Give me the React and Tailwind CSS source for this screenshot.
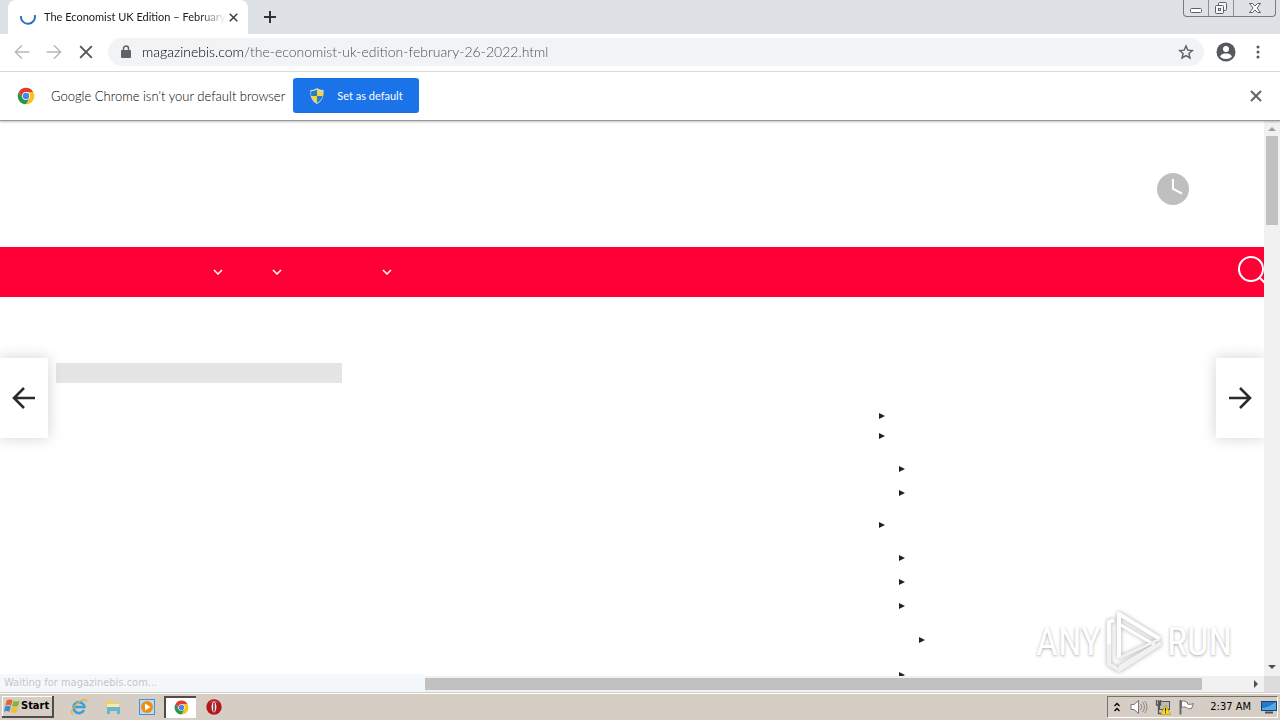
import React from "react";

const uiFont = "font-['Lato','Open_Sans',sans-serif]";
const winFont = "font-['DejaVu_Sans_Condensed','DejaVu_Sans',sans-serif]";

function ChromeLogo({ className }) {
  return (
    <svg viewBox="0 0 48 48" className={className} aria-hidden="true">
      <path d="M24 2A22 22 0 0 0 4.9 13L14.5 29.5 24 24 24 13H43.1A22 22 0 0 0 24 2Z" fill="#e33b2e" />
      <path d="M43.1 13H24L33.5 29.5 24 46A22 22 0 0 0 43.1 13Z" fill="#fbc116" />
      <path d="M4.9 13A22 22 0 0 0 24 46L33.5 29.5 24 24 14.5 29.5Z" fill="#279847" />
      <circle cx="24" cy="24" r="10.5" fill="#fff" />
      <circle cx="24" cy="24" r="8.5" fill="#4285f4" />
    </svg>
  );
}

function Cross({ className, width = 2 }) {
  return (
    <svg viewBox="0 0 12 12" className={className} fill="none" stroke="currentColor" strokeWidth={width} aria-hidden="true">
      <path d="M1 1 11 11M11 1 1 11" />
    </svg>
  );
}

function Arrow({ className, width = 2 }) {
  return (
    <svg viewBox="0 0 24 24" className={className} fill="none" stroke="currentColor" strokeWidth={width} aria-hidden="true">
      <path d="M23 12H3M12 2 2 12l10 10" />
    </svg>
  );
}

function TabStrip() {
  return (
    <header className="flex h-[34px] shrink-0 items-start justify-between bg-[#dee1e6] pl-2">
      <div className="flex h-full items-center">
        <div className="flex h-full w-60 items-center rounded-t-lg bg-white pl-3 pr-2">
          <svg viewBox="0 0 16 16" className="mr-2 size-4 shrink-0" fill="none" stroke="#2f6fc4" strokeWidth="2" aria-hidden="true">
            <path d="M14.7 6A7 7 0 1 1 1 7" />
          </svg>
          <span className="whitespace-nowrap text-[11px] leading-4 text-[#202124] [mask-image:linear-gradient(to_right,#000_85%,transparent)]">
            The Economist UK Edition – February
          </span>
          <button aria-label="Close tab" className="ml-auto grid w-4 shrink-0 place-items-center text-[#3c4043]">
            <Cross className="size-[9px]" />
          </button>
        </div>
        <button aria-label="New tab" className="ml-3.5 grid size-4 place-items-center text-[#303236]">
          <svg viewBox="0 0 12 12" className="size-3" stroke="currentColor" strokeWidth="2" aria-hidden="true">
            <path d="M6 0V12M0 6H12" />
          </svg>
        </button>
      </div>
      <div className="mr-1 flex h-[17px] rounded-b-[4px] border border-t-0 border-[#777b84] text-[#5c6069]">
        <button aria-label="Minimize" className="grid w-[25px] place-items-center border-r border-[#8b8f98]">
          <svg viewBox="0 0 14 12" className="h-3 w-3.5" aria-hidden="true">
            <rect x="1.5" y="6.5" width="11" height="4" rx="1" fill="#fff" stroke="currentColor" />
          </svg>
        </button>
        <button aria-label="Restore" className="grid w-[25px] place-items-center border-r border-[#8b8f98]">
          <svg viewBox="0 0 14 14" className="size-3.5" fill="#f4f5f7" stroke="currentColor" aria-hidden="true">
            <rect x="4.5" y="1.5" width="8" height="8" rx="1" />
            <rect x="1.5" y="4.5" width="8" height="8" rx="1" />
            <rect x="4.5" y="7.5" width="2" height="2" />
          </svg>
        </button>
        <button aria-label="Close window" className="grid w-[41px] place-items-center">
          <svg viewBox="0 0 14 12" className="h-3 w-3.5" fill="#fff" stroke="currentColor" aria-hidden="true">
            <path d="M1.5 1.5H4.5L7 4 9.5 1.5H12.5L9 6 12.5 10.5H9.5L7 8 4.5 10.5H1.5L5 6Z" />
          </svg>
        </button>
      </div>
    </header>
  );
}

function Toolbar() {
  return (
    <div className="flex h-[38px] shrink-0 items-center border-b border-[#dadce0] bg-white px-3.5 pb-0.5">
      <button aria-label="Back" className="mr-4 text-[#b4b6b9]">
        <Arrow className="size-4" />
      </button>
      <button aria-label="Forward" className="mr-4 text-[#b4b6b9]">
        <Arrow className="size-4 rotate-180" />
      </button>
      <button aria-label="Stop loading" className="mr-3.5 grid size-4 place-items-center text-[#55585c]">
        <Cross className="size-3.5" width={1.7} />
      </button>
      <div className="flex h-7 flex-1 items-center rounded-full bg-[#f1f3f4] pl-[13px] pr-2.5">
        <svg viewBox="0 0 10 14" className="mr-[11px] h-3.5 w-2.5 shrink-0" aria-hidden="true">
          <rect x="0" y="5" width="10" height="8" rx="1" fill="#5f6368" />
          <path d="M2.5 5.5V3.5a2.5 2.5 0 0 1 5 0V5.5" fill="none" stroke="#5f6368" strokeWidth="1.5" />
        </svg>
        <input
          aria-label="Address"
          defaultValue="magazinebis.com/the-economist-uk-edition-february-26-2022.html"
          className="min-w-0 flex-1 bg-[linear-gradient(to_right,#000_102px,#45494e_102px)] bg-clip-text text-sm font-light leading-5 text-transparent outline-none"
        />
        <button aria-label="Bookmark this page" className="text-[#5f6368]">
          <svg viewBox="0 0 24 24" className="size-4" fill="none" stroke="currentColor" strokeWidth="2.2" aria-hidden="true">
            <path d="M12 3l2.7 6.200 6.800.6-5.100 4.500 1.500 6.600L12 17.400l-5.900 3.500 1.500-6.600L2.500 9.800l6.800-.6z" />
          </svg>
        </button>
      </div>
      <button aria-label="Profile" className="ml-3">
        <svg viewBox="0 0 20 20" className="size-5" aria-hidden="true">
          <circle cx="10" cy="10" r="9.5" fill="#55585c" />
          <circle cx="10" cy="7" r="3" fill="#fff" />
          <path d="M4 14.5c1-2.500 4-3 6-3s5 .5 6 3c-1.500 1.700-3.500 2.500-6 2.500s-4.500-.8-6-2.500z" fill="#fff" />
        </svg>
      </button>
      <button aria-label="Browser menu" className="ml-3.5">
        <svg viewBox="0 0 16 16" className="size-4" fill="#55585c" aria-hidden="true">
          <circle cx="8" cy="3" r="1.5" />
          <circle cx="8" cy="8" r="1.5" />
          <circle cx="8" cy="13" r="1.5" />
        </svg>
      </button>
    </div>
  );
}

function InfoBar() {
  return (
    <div className="z-10 flex h-[49px] shrink-0 items-center border-b border-[#97999c] bg-white pb-px pl-[17px] pr-[18px] shadow-[0_1px_2px_rgba(0,0,0,0.25)]">
      <ChromeLogo className="mr-4 size-[18px]" />
      <p className="text-[13px] font-light leading-5 text-black">Google Chrome isn't your default browser</p>
      <button className="ml-2 flex h-[35px] items-center rounded-[3px] bg-[#1a73e8] px-4 text-[11px] leading-4 text-white">
        <svg viewBox="0 0 16 16" className="mr-3 size-4" aria-hidden="true">
          <path d="M8 0C6 1.500 4 2 1.500 2 1 8 2.500 13 8 16 13.500 13 15 8 14.500 2 12 2 10 1.500 8 0Z" fill="#d6dde0" />
          <path d="M8 1.500V8H2.300C2 6.300 2 4.500 2.200 3.200 4.500 3.100 6.300 2.600 8 1.500Z" fill="#267fc0" />
          <path d="M8 1.500V8h5.700c.3-1.700.3-3.500.1-4.800C11.500 3.100 9.700 2.600 8 1.500Z" fill="#f6d33c" />
          <path d="M8 8H2.300C3 11 5 13.300 8 14.900Z" fill="#f6d33c" />
          <path d="M8 8h5.700C13 11 11 13.300 8 14.900Z" fill="#267fc0" />
        </svg>
        Set as default
      </button>
      <button aria-label="Dismiss" className="ml-auto text-[#5f6368]">
        <Cross className="size-3" width={2} />
      </button>
    </div>
  );
}

function Chevron({ className }) {
  return (
    <button aria-label="Open submenu" className={className}>
      <svg viewBox="0 0 10 6" className="h-1.5 w-2.5" fill="none" stroke="#fff" strokeWidth="1.5" aria-hidden="true">
        <path d="M1 1 5 5 9 1" />
      </svg>
    </button>
  );
}

function Item({ children }) {
  return (
    <li>
      <div className="flex h-5 items-center">
        <svg viewBox="0 0 6 6" className="size-1.5" fill="#222" aria-hidden="true">
          <path d="M0 0 6 3 0 6Z" />
        </svg>
      </div>
      {children}
    </li>
  );
}

function Contents() {
  return (
    <ul className="w-[385px] pt-[109px]">
      <Item />
      <Item>
        <ul className="mb-3 mt-[13px] flex flex-col gap-1 pl-5">
          <Item />
          <Item />
        </ul>
      </Item>
      <Item>
        <ul className="mt-[13px] flex flex-col gap-1 pl-5">
          <Item />
          <Item />
          <Item>
            <ul className="mb-[11px] mt-3.5 pl-5">
              <Item />
            </ul>
          </Item>
          <Item />
        </ul>
      </Item>
    </ul>
  );
}

function Watermark() {
  const text =
    "font-['Roboto_Condensed','Liberation_Sans_Narrow','Open_Sans_Condensed','Noto_Sans',sans-serif] text-[38px] font-normal leading-[48px] text-white [text-shadow:0_1px_3px_#aaa]";
  return (
    <div className="absolute bottom-0.5 right-8 flex items-center" aria-label="ANY RUN">
      <span className={text}>ANY</span>
      <svg viewBox="0 0 58 64" className="mx-1 h-16 w-[58px] drop-shadow-[0_0_2px_#aaa]" fill="none" strokeWidth="4" strokeLinejoin="round" aria-hidden="true">
        <path d="M14 48V4L55 29" stroke="#fff" />
        <path d="M14 14 50 35" stroke="#fff" strokeWidth="3" />
        <path d="M14 48 55 29M50 35 14 57" stroke="#f1f1f1" strokeWidth="3" />
        <path d="M9 10 4 12V34" stroke="#fff" />
        <path d="M4 34V54L14 60 56 33" stroke="#f1f1f1" />
      </svg>
      <span className={text}>RUN</span>
    </div>
  );
}

function Page() {
  return (
    <main className="relative min-w-0 flex-1 overflow-hidden bg-white">
      <div className="flex h-[126px] items-center justify-end pr-[75px] pt-2.5">
        <svg viewBox="0 0 32 32" className="size-8" aria-hidden="true">
          <circle cx="16" cy="16" r="16" fill="#bfbfbf" />
          <path d="M16 6V16L25 20.5" fill="none" stroke="#fff" strokeWidth="2" />
        </svg>
      </div>
      <nav className="flex h-[50px] items-center bg-[#ff0036]">
        <Chevron className="ml-[213px]" />
        <Chevron className="ml-[49px]" />
        <Chevron className="ml-[100px]" />
        <button aria-label="Search" className="-mr-1 mb-0.5 ml-auto">
          <svg viewBox="0 0 31 31" className="size-[31px]" fill="none" stroke="#fff" strokeWidth="2" aria-hidden="true">
            <circle cx="14" cy="13" r="12" />
            <path d="M22 21 30 29" />
          </svg>
        </button>
      </nav>
      <div className="flex justify-between pl-14">
        <div className="mt-[66px] h-5 w-[286px] bg-[#e5e5e5]" />
        <Contents />
      </div>
      <button aria-label="Previous article" className="absolute left-0 top-[237px] grid h-20 w-12 place-items-center bg-white text-[#2b2b2b] shadow-[0_0_14px_rgba(0,0,0,0.18)]">
        <Arrow className="size-6" width={2.6} />
      </button>
      <button aria-label="Next article" className="absolute right-0 top-[237px] grid h-20 w-12 place-items-center bg-white text-[#2b2b2b] shadow-[0_0_14px_rgba(0,0,0,0.18)]">
        <Arrow className="size-6 rotate-180" width={2.6} />
      </button>
      <Watermark />
    </main>
  );
}

function StartFlag() {
  return (
    <svg viewBox="0 0 18 16" className="h-4 w-[17px]" aria-hidden="true">
      <path d="M3 2c2-1.500 4-1 6 0L7.500 7.500c-2-1-4-1-6 0Z" fill="#e8622a" />
      <path d="M10 2.500c2 1 4 1 6.500 0L15 8c-2 1-4.500 1-6.500 0Z" fill="#7cb83c" />
      <path d="M1.200 8.500c2-1 4-1 6 0L5.700 14c-2-1-4-1-5.700 0Z" fill="#3c8bd0" />
      <path d="M8.200 9c2 1 4.500 1 6.500 0L13.200 14.500c-2 1-4.500 1-6.500 0Z" fill="#f3bd2d" />
    </svg>
  );
}

function Taskbar() {
  return (
    <footer className={`flex h-7 shrink-0 items-center border-t border-[#d4d0c8] bg-[#d6cec5] pl-0.5 shadow-[inset_0_1px_0_#fff] ${winFont}`}>
      <button className="flex h-[22px] items-center border-b-2 border-r-2 border-[#504c48] bg-[#d6cec5] pl-0.5 pr-[3px] text-[11px] font-bold leading-4 text-black shadow-[inset_1px_1px_0_#fff]">
        <StartFlag />
        Start
      </button>
      <div className="ml-2 flex items-center">
        <button aria-label="Internet Explorer" className="grid h-[22px] w-[34px] place-items-center">
          <svg viewBox="0 0 18 18" className="size-[18px]" fill="none" aria-hidden="true">
            <path d="M14 12a5.500 5.500 0 1 1 .5-3H5" stroke="#3aa0dc" strokeWidth="2.6" />
            <path d="M3 16C0 15.500 2 10 7 5.500S17 0 16.500 4" stroke="#e3b23c" strokeWidth="1.3" />
          </svg>
        </button>
        <button aria-label="File Explorer" className="grid h-[22px] w-[34px] place-items-center">
          <svg viewBox="0 0 18 18" className="size-[18px]" aria-hidden="true">
            <path d="M2 2h5l1 2h7v10H2Z" fill="#e9cf79" />
            <path d="M3 6h12v7H3Z" fill="#f8e9a8" />
            <path d="M3 9h13v7h-3v-3H6v3H3Z" fill="#62b7d9" />
          </svg>
        </button>
        <button aria-label="Media Player" className="grid h-[22px] w-[34px] place-items-center">
          <svg viewBox="0 0 18 18" className="size-[18px]" aria-hidden="true">
            <rect x="1.5" y="1.5" width="15" height="15" fill="#b8dcf3" stroke="#4c8fc8" />
            <circle cx="9" cy="9" r="6" fill="#f28a16" />
            <path d="M7 5.500v7L12.500 9Z" fill="#fff" />
          </svg>
        </button>
        <button aria-label="Google Chrome" className="grid h-[22px] w-8 place-items-center border-l-2 border-t-2 border-[#504c48] bg-white">
          <ChromeLogo className="size-[15px]" />
        </button>
        <button aria-label="Opera" className="grid h-[22px] w-9 place-items-center">
          <svg viewBox="0 0 16 16" className="size-4" aria-hidden="true">
            <circle cx="8" cy="8" r="7.7" fill="#b3161b" />
            <path d="M3 4a6.500 6.500 0 0 1 10 0c-3-1.500-7-1.500-10 0Z" fill="#e4595c" />
            <ellipse cx="8" cy="8" rx="2.4" ry="5.4" fill="#f3e9e4" />
            <path d="M8 3.500v9" stroke="#5c0709" strokeWidth="1.3" />
          </svg>
        </button>
      </div>
      <div className="ml-auto mr-0.5 flex h-[22px] items-center border border-b-white border-l-[#77716b] border-r-white border-t-[#77716b] pl-1.5 text-[11px] leading-4 text-black">
        <button aria-label="Show hidden icons">
          <svg viewBox="0 0 6 10" className="h-2.5 w-1.5" fill="none" stroke="#000" strokeWidth="1.3" aria-hidden="true">
            <path d="M.5 4 3 1.500 5.500 4M.5 9 3 6.500 5.500 9" />
          </svg>
        </button>
        <svg viewBox="0 0 18 16" className="ml-2.5 h-4 w-[18px]" fill="none" aria-hidden="true">
          <path d="M1 5.500h3L8.500 1.500v13L4 10.500H1Z" fill="#fff" stroke="#777" />
          <path d="M10.500 5c1.500 2 1.500 4 0 6M12.500 3c2.500 3 2.500 7 0 10M14.700 2c3 4 3 8 0 12" stroke="#888" />
        </svg>
        <svg viewBox="0 0 18 16" className="ml-1.5 h-4 w-[18px]" fill="none" aria-hidden="true">
          <rect x="5.5" y="2.5" width="10" height="8" fill="#b9bcc0" stroke="#555" />
          <path d="M2.500 1v5h4V1M4.500 1v13.500H8" stroke="#555" strokeWidth="1.3" />
          <path d="M11.500 6 16.500 15.500H6.500Z" fill="#ffd51c" stroke="#9a7d00" strokeWidth=".5" />
          <path d="M11.500 9v3.500M11.500 13.300v1" stroke="#222" />
        </svg>
        <svg viewBox="0 0 18 16" className="ml-1.5 h-4 w-[18px]" fill="none" aria-hidden="true">
          <path d="M3.500 2.500c3-1.500 4 .5 6 1v1.500c2 .5 4 .5 6-.5l-2 5c-2 .8-4 0-5-1-2-.8-3.500-.5-5 0Z" fill="#fff" stroke="#777" />
          <path d="M2.500 1v14.500" stroke="#666" strokeWidth="2" />
        </svg>
        <span className="ml-3.5 mr-2.5 whitespace-nowrap">2:37 AM</span>
        <svg viewBox="0 0 16 14" className="h-3.5 w-4" aria-hidden="true">
          <rect x=".5" y="1.5" width="15" height="9" fill="#2478ca" stroke="#19426f" />
          <path d="M1 8C6 8 10 5 15 2v8H1Z" fill="#54a8e8" />
          <path d="M4 12.500h8" stroke="#4b5560" strokeWidth="2" />
        </svg>
      </div>
    </footer>
  );
}

export default function App() {
  return (
    <div className={`flex h-screen flex-col overflow-hidden bg-white ${uiFont}`}>
      <TabStrip />
      <Toolbar />
      <InfoBar />
      <div className="flex min-h-0 flex-1">
        <Page />
        <div className="flex w-4 shrink-0 flex-col items-center bg-[#f1f1f1] pt-1.5">
          <svg viewBox="0 0 8 4" className="h-1 w-2" fill="#a0a0a0" aria-hidden="true">
            <path d="M0 4 4 0 8 4Z" />
          </svg>
          <div className="mt-[5px] h-[89px] w-3 bg-[#c1c1c1]" />
          <svg viewBox="0 0 8 4" className="mb-[7px] mt-auto h-1 w-2" fill="#505050" aria-hidden="true">
            <path d="M0 0 4 4 8 0Z" />
          </svg>
        </div>
      </div>
      <div className="flex h-4 shrink-0 bg-[#f1f1f1]">
        <div className={`z-10 -mt-0.5 w-[425px] rounded-tr-[3px] bg-[#f5f8fb] pl-1 text-[11px] leading-[18px] text-[#c3c7cb] ${winFont}`}>
          Waiting for magazinebis.com...
        </div>
        <div className="flex flex-1 items-center">
          <div className="h-3 w-[777px] bg-[#c1c1c1]" />
        </div>
        <svg viewBox="0 0 4 8" className="my-1 mr-1.5 h-2 w-1" fill="#505050" aria-hidden="true">
          <path d="M0 0 4 4 0 8Z" />
        </svg>
        <div className="w-4 bg-[#dcdcdc]" />
      </div>
      <Taskbar />
    </div>
  );
}
